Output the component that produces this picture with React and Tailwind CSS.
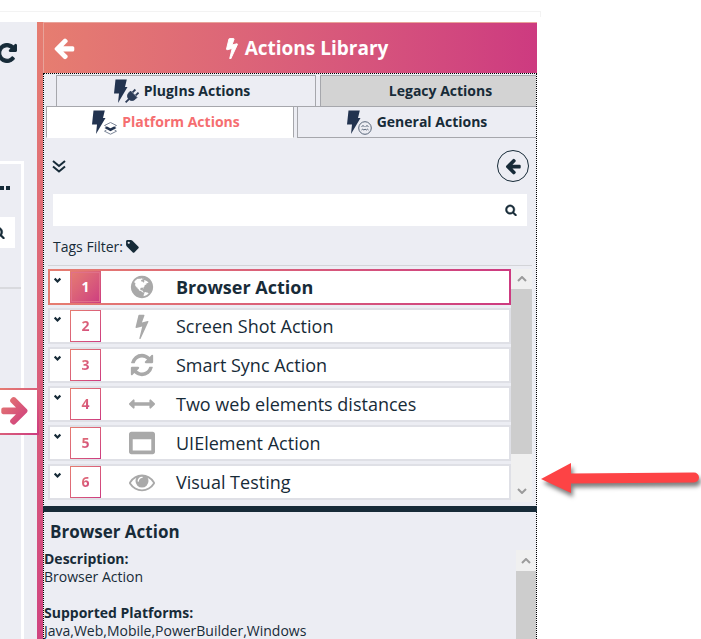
import { useState } from "react";

const paths = {
  arrowLeft:
    "M1664 896v128q0 53-32.5 90.5t-84.5 37.5h-704l293 294q38 36 38 90t-38 90l-75 76q-37 37-90 37-52 0-91-37l-651-652q-37-37-37-90 0-52 37-91l651-650q38-38 91-38 52 0 90 38l75 74q38 38 38 91t-38 91l-293 293h704q52 0 84.5 37.5t32.5 90.5z",
  bolt: "M1333 566q18 20 7 44l-540 1157q-13 25-42 25-4 0-14-2-17-5-25.5-19t-4.5-30l197-808-406 101q-4 1-12 1-18 0-31-11-18-15-13-39l201-825q4-14 16-23t28-9h328q19 0 32 12.5t13 29.5q0 8-5 18l-171 463 396-98q8-2 12-2 19 0 34 15z",
  search:
    "M1216 832q0-185-131.5-316.5t-316.5-131.5-316.5 131.5-131.5 316.5 131.5 316.5 316.5 131.5 316.5-131.5 131.5-316.5zm512 832q0 52-38 90t-90 38q-54 0-90-38l-343-342q-179 124-399 124-143 0-273.5-55.5t-225-150-150-225-55.5-273.5 55.5-273.5 150-225 225-150 273.5-55.5 273.5 55.5 225 150 150 225 55.5 273.5q0 220-124 399l343 343q37 37 37 90z",
  refresh:
    "M1639 1056q0 5-1 7-64 268-268 434.5t-478 166.5q-146 0-282.5-55t-243.5-157l-129 129q-19 19-45 19t-45-19-19-45v-448q0-26 19-45t45-19h448q26 0 45 19t19 45-19 45l-137 137q71 66 161 102t187 36q134 0 250-65t186-179q11-17 53-117 8-23 30-23h192q13 0 22.5 9.5t9.5 22.5zm25-800v448q0 26-19 45t-45 19h-448q-26 0-45-19t-19-45 19-45l138-138q-148-137-349-137-134 0-250 65t-186 179q-11 17-53 117-8 23-30 23h-199q-13 0-22.5-9.5t-9.5-22.5v-7q65-268 270-434.5t480-166.5q146 0 284 55.5t245 156.5l130-129q19-19 45-19t45 19 19 45z",
  arrowsH:
    "M1792 896q0 26-19 45l-256 256q-19 19-45 19t-45-19-19-45v-128h-1024v128q0 26-19 45t-45 19-45-19l-256-256q-19-19-19-45t19-45l256-256q19-19 45-19t45 19 19 45v128h1024v-128q0-26 19-45t45-19 45 19l256 256q19 19 19 45z",
  window:
    "M256 1408h1280v-768h-1280v768zm1536-1120v1216q0 66-47 113t-113 47h-1472q-66 0-113-47t-47-113v-1216q0-66 47-113t113-47h1472q66 0 113 47t47 113z",
  eye: "M1664 960q-152-236-381-353 61 104 61 225 0 185-131.5 316.5t-316.5 131.5-316.5-131.5-131.5-316.5q0-121 61-225-229 117-381 353 133 205 333.5 326.5t434.5 121.5 434.5-121.5 333.5-326.5zm-720-384q0-20-14-34t-34-14q-125 0-214.5 89.5t-89.5 214.5q0 20 14 34t34 14 34-14 14-34q0-86 61-147t147-61q20 0 34-14t14-34zm848 384q0 34-20 69-140 230-376.5 368.5t-499.5 138.5-499.5-139-376.5-368q-20-35-20-69t20-69q140-229 376.5-368t499.5-139 499.5 139 376.5 368q20 35 20 69z",
  tag: "M576 448q0-53-37.5-90.5t-90.5-37.5-90.5 37.5-37.5 90.5 37.5 90.5 90.5 37.5 90.5-37.5 37.5-90.5zm1067 576q0 53-37 90l-491 492q-39 37-91 37-53 0-90-37l-715-716q-38-37-64.5-101t-26.5-117v-416q0-52 38-90t90-38h416q53 0 117 26.5t102 64.5l715 714q37 39 37 91z",
  redo: "M1664 256v448q0 26-19 45t-45 19h-448q-42 0-59-40-17-39 14-69l138-138q-148-137-349-137-104 0-198.5 40.5t-163.5 109.5-109.5 163.5-40.5 198.5 40.5 198.5 109.5 163.5 163.5 109.5 198.5 40.5q119 0 225-52t179-147q7-10 23-12 15 0 25 9l137 138q9 8 9.5 20.5t-7.5 22.5q-109 132-264 204.5t-327 72.5q-156 0-298-61t-245-164-164-245-61-298 61-298 164-245 245-164 298-61q147 0 284.5 55.5t244.5 156.5l130-129q29-31 70-14 39 17 39 59z",
  globe:
    "M896 128q209 0 385.5 103t279.5 279.5 103 385.5-103 385.5-279.5 279.5-385.5 103-385.5-103-279.5-279.5-103-385.5 103-385.5 279.5-279.5 385.5-103zm274 521q-2 1-9.5 9.5t-13.5 9.5q2 0 4.5-5t5-11 3.5-7q6-7 22-15 14-6 52-12 34-8 51 11-2-2 9.5-13t14.5-12q3-2 15-4.5t15-7.5l2-22q-12 1-17.5-7t-6.5-21q0 2-6 8 0-7-4.5-8t-11.5 1-9 1q-10-3-15-7.5t-8-16.5-4-15q-2-5-9.5-11t-9.5-10q-1-2-2.5-5.5t-3-6.5-4-5.5-5.5-2.5-7 5-7.5 10-4.5 5q-3-2-6-1.5t-4.5 1-4.5 3-5 3.5q-3 2-8.5 3t-8.5 2q15-5-1-11-10-4-16-3 9-4 7.5-12t-8.5-14h5q-1-4-8.5-8.5t-17.5-8.5-13-6q-8-5-34-9.5t-33-.5q-5 6-4.5 10.5t4 14 3.5 12.5q1 6-5.500 13t-6.500 12q0 7 14 15.5t10 21.5q-3 8-16 16t-16 12q-5 8-1.500 18.5t10.500 16.500q2 2 1.500 4t-3.500 4.500-5.500 4-6.500 3.500l-3 2q-11 5-20.500-6t-13.500-26q-7-25-16-30-23-8-29 1-5-13-41-26-25-9-58-4 6-1 0-15-7-15-19-12 3-6 4-17.500t1-13.500q3-13 12-23 1-1 7-8.500t9.500-13.500.5-6q35 4 50-11 5-5 11.500-17t10.500-17q9-6 14-5.500t14.500 5.500 14.500 5q14 1 15.500-11t-7.500-20q12 1 3-17-4-7-8-9-12-4-27 5-8 4 2 8-1-1-9.500 10.500t-16.500 17.500-16-5q-1-1-5.500-13.500t-9.500-13.500q-8 0-16 15 3-8-11-15t-24-8q19-12-8-27-7-4-20.500-5t-19.500 4q-5 7-5.500 11.500t5 8 10.500 5.500 11.500 4 8.500 3q14 10 8 14-2 1-8.500 3.500t-11.500 4.500-6 4q-3 4 0 14t-2 14q-5-5-9-17.500t-7-16.500q7 9-25 6l-10-1q-4 0-16 2t-20.500 1-13.500-8q-4-8 0-20 1-4 4-2-4-3-11-9.500t-10-8.500q-46 15-94 41 6 1 12-1 5-2 13-6.500t10-5.500q34-14 42-7l5-5q14 16 20 25-7-4-30-1-20 6-22 12 7 12 5 18-4-3-11.500-10t-14.500-11-15-5q-16 0-22 1-146 80-235 222 7 7 12 8 4 1 5 9t2.500 11 11.500-3q9 8 3 19 1-1 44 27 19 17 21 21 3 11-10 18-1-2-9-9t-9-4q-3 5 .5 18.500t10.500 12.500q-7 0-9.500 16t-2.500 35.500-1 23.500l2 1q-3 12 5.500 34.500t21.500 19.500q-13 3 20 43 6 8 8 9 3 2 12 7.500t15 10 10 10.500q4 5 10 22.500t14 23.500q-2 6 9.500 20t10.500 23q-1 0-2.500 1t-2.500 1q3 7 15.500 14t15.500 13q1 3 2 10t3 11 8 2q2-20-24-62-15-25-17-29-3-5-5.500-15.500t-4.500-14.500q2 0 6 1.500t8.500 3.500 7.500 4 2 3q-3 7 2 17.500t12 18.500 17 19 12 13q6 6 14 19.500t0 13.500q9 0 20 10.500t17 19.500q5 8 8 26t5 24q2 7 8.500 13.500t12.500 9.500l16 8 13 7q5 2 18.500 10.500t21.500 11.500q10 4 16 4t14.500-2.500 13.500-3.500q15-2 29 15t21 21q36 19 55 11-2 1 .5 7.500t8 15.500 9 14.500 5.500 8.500q5 6 18 15t18 15q6-4 7-9-3 8 7 20t18 10q14-3 14-32-31 15-49-18 0-1-2.500-5.500t-4-8.500-2.500-8.500 0-7.500 5-3q9 0 10-3.500t-2-12.500-4-13q-1-8-11-20t-12-15q-5 9-16 8t-16-9q0 1-1.500 5.500t-1.500 6.500q-13 0-15-1 1-3 2.500-17.500t3.500-22.500q1-4 5.500-12t7.500-14.500 4-12.500-4.500-9.500-17.500-2.500q-19 1-26 20-1 3-3 10.500t-5 11.500-9 7q-7 3-24 2t-24-5q-13-8-22.500-29t-9.500-37q0-10 2.500-26.500t3-25-5.500-24.500q3-2 9-9.500t10-10.500q2-1 4.500-1.500t4.500 0 4-1.500 3-6q-1-1-4-3-3-3-4-3 7 3 28.500-1.500t27.500 1.500q15 11 22-2 0-1-2.500-9.500t-.5-13.500q5 27 29 9 3 3 15.500 5t17.500 5q3 2 7 5.500t5.500 4.500 5-.5 8.500-6.500q10 14 12 24 11 40 19 44 7 3 11 2t4.500-9.500 0-14-1.500-12.500l-1-8v-18l-1-8q-15-3-18.500-12t1.500-18.500 15-18.500q1-1 8-3.500t15.500-6.500 12.500-8q21-19 15-35 7 0 11-9-1 0-5-3t-7.500-5-4.500-2q9-5 2-16 5-3 7.500-11t7.500-10q9 12 21 2 8-8 1-16 5-7 20.500-10.500t18.500-9.500q7 2 8-2t1-12 3-12q4-5 15-9t13-5l17-11q3-4 0-4 18 2 31-11 10-11-6-20 3-6-3-9.500t-15-5.500q3-1 11.500-.5t10.500-1.500q15-10-7-16-17-5-43 12zm-163 877q206-36 351-189-3-3-12.500-4.500t-12.500-3.500q-18-7-24-8 1-7-2.500-13t-8-9-12.500-8-11-7q-2-2-7-6t-7-5.500-7.500-4.500-8.500-2-10 1l-3 1q-3 1-5.500 2.500t-5.500 3-4 3 0 2.500q-21-17-36-22-5-1-11-5.500t-10.500-7-10-1.500-11.500 7q-5 5-6 15t-2 13q-7-5 0-17.500t2-18.500q-3-6-10.500-4.500t-12 4.500-11.500 8.500-9 6.500-8.500 5.500-8.500 7.500q-3 4-6 12t-5 11q-2-4-11.500-6.500t-9.500-5.500q2 10 4 35t5 38q7 31-12 48-27 25-29 40-4 22 12 26 0 7-8 20.500t-7 21.500q0 6 2 16z",
};

function Icon({ name, className, fill = "currentColor", weight = 0 }) {
  return (
    <svg viewBox="0 0 1792 1792" className={className} fill={fill} stroke={fill} strokeWidth={weight} aria-hidden="true">
      <path d={paths[name]} />
    </svg>
  );
}

function Chevron({ className, up, width = 2 }) {
  return (
    <svg viewBox="0 0 10 6" className={className} fill="none" stroke="currentColor" strokeWidth={width} aria-hidden="true">
      <path d={up ? "M1 5l4-4 4 4" : "M1 1l4 4 4-4"} />
    </svg>
  );
}

function TabIcon({ kind }) {
  return (
    <svg viewBox="0 0 25 25" className="h-[25px] w-[25px] shrink-0" aria-hidden="true">
      <path d="M1.500.5h11.300l-1.800 7.500h2.500L4 24l1-9.500H0z" fill="#22334f" />
      {kind === "plug" && (
        <g transform="translate(18 17) rotate(45)" fill="#2c3c57" stroke="#2c3c57">
          <path d="M-4.500 -2.500h9v2.500a4.500 4.500 0 0 1-9 0z" strokeWidth=".8" />
          <path d="M-2.200-3v-4M2.200-3v-4M0 4v5" strokeWidth="1.800" fill="none" />
        </g>
      )}
      {kind === "layers" && (
        <g strokeLinejoin="round">
          <path d="M12.500 15.500l6-3 6 3-2 1M12.500 15.500l2 1" stroke="#7b8597" strokeWidth="1" fill="none" />
          <path d="M12.500 18l2.500-1.500 3.500 1.700 3.500-1.700 2.500 1.500-6 3.200z" fill="#22334f" />
          <path d="M14.500 20l-2 1.200 6 3 6-3-2-1.200" stroke="#7b8597" strokeWidth="1" fill="none" />
        </g>
      )}
      {kind === "face" && (
        <g stroke="#596679" strokeWidth="1" fill="none">
          <circle cx="18" cy="18" r="6.300" fill="#ecedf3" />
          <path d="M14.500 16.500l1.500-.8 1.500.8M18.500 16.500l1.500-.8 1.500.8M14.500 20l1.200-.8 1.200.8 1.200-.8 1.200.8 1.200-.8 1 .8" />
        </g>
      )}
    </svg>
  );
}

function Tab({ label, icon, active, className, onClick }) {
  return (
    <button
      type="button"
      role="tab"
      aria-selected={active}
      onClick={onClick}
      className={`flex items-center justify-center gap-[5px] border border-[#a6a7ac] text-sm leading-5 font-bold ${className} ${
        active ? "border-b-white bg-white text-[#f56e70]" : "text-[#172b38]"
      }`}
    >
      {icon && <TabIcon kind={icon} />}
      {label}
    </button>
  );
}

const actions = [
  { name: "Browser Action", icon: "globe" },
  { name: "Screen Shot Action", icon: "bolt" },
  { name: "Smart Sync Action", icon: "refresh" },
  { name: "Two web elements distances", icon: "arrowsH" },
  { name: "UIElement Action", icon: "window" },
  { name: "Visual Testing", icon: "eye" },
];

function ActionRow({ index, action, selected, onSelect }) {
  return (
    <li className={`h-9 p-0.5 ${selected ? "bg-linear-to-r from-[#e67d70] to-[#cd3a80]" : "bg-[#dfe0e6]"}`}>
      <div className="flex h-full bg-white">
        <button type="button" aria-label={`Expand ${action.name}`} className="flex w-5 items-start pt-1.5 pl-1">
          <Chevron className="h-1.5 w-[7px]" width={3} />
        </button>
        <button type="button" onClick={onSelect} className="flex flex-1 items-center text-left">
          <span className="h-8 w-[31px] bg-linear-to-br from-[#e67d70] to-[#cd3a80] p-px">
            <span className={`flex h-full items-center justify-center ${selected ? "border border-[#e0708a]" : "bg-white"}`}>
              <span
                className={`text-sm leading-5 font-bold ${
                  selected ? "text-white" : "bg-linear-to-br from-[#e67d70] to-[#cd3a80] bg-clip-text text-transparent"
                }`}
              >
                {index}
              </span>
            </span>
          </span>
          <Icon name={action.icon} className="ml-7 h-[26px] w-[26px] text-[#a9a9a9]" />
          <span className={`ml-[21px] text-lg leading-6 ${selected ? "font-bold" : ""}`}>{action.name}</span>
        </button>
      </div>
    </li>
  );
}

function Workspace() {
  return (
    <aside className="flex w-[37px] shrink-0 flex-col overflow-hidden bg-[#ecedf3]">
      <div className="flex h-[139px] justify-end pt-5 pr-[19px]">
        <button type="button" aria-label="Redo" className="h-[22px] w-[22px] shrink-0">
          <Icon name="redo" className="h-[22px] w-[22px]" weight={90} />
        </button>
      </div>
      <div className="mr-[13px] flex flex-1 flex-col border-t-[3px] border-r-[3px] border-white">
        <div className="flex h-[53px] items-start gap-0.5 pt-[22px]">
          <span className="h-1 w-1 bg-[#172b38]" />
          <span className="h-1 w-1 bg-[#172b38]" />
        </div>
        <div className="mr-1.5 flex h-[31px] items-center justify-end overflow-hidden bg-white pr-2.5">
          <Icon name="search" className="h-[13px] w-[13px] shrink-0" weight={60} />
        </div>
        <div className="mt-[39px] border-t-2 border-[#d9dade]" />
      </div>
    </aside>
  );
}

function Annotation() {
  return (
    <div className="w-[164px] shrink-0 pt-[435px] pl-1">
      <svg viewBox="0 0 160 46" className="h-[46px] w-[160px] overflow-visible drop-shadow-[2px_4px_2px_rgba(0,0,0,0.5)]" aria-hidden="true">
        <path d="M0 22L30 6v10.500l123-1a5 5 0 0 1 0 10L30 26.500V36z" fill="#fd4345" />
      </svg>
    </div>
  );
}

export default function App() {
  const [tab, setTab] = useState("Platform Actions");
  const [selected, setSelected] = useState(0);

  return (
    <div className="flex h-screen flex-col overflow-hidden bg-white font-['Open_Sans','Segoe_UI',sans-serif] text-[#172b38]">
      <div className="mr-40 h-[22px] shrink-0 pt-[11px]">
        <div className="h-1.5 border-t border-r border-[#f3f3f3]" />
      </div>
      <div className="flex min-h-0 flex-1">
        <Workspace />
        <div className="relative w-1.5 shrink-0 bg-linear-to-b from-[#e67d70] to-[#d04480]">
          <button
            type="button"
            aria-label="Open panel"
            className="absolute top-[366px] right-1 h-[47px] w-10 bg-linear-to-br from-[#e67d70] to-[#cd3a80] py-0.5 pr-0.5"
          >
            <span className="flex h-full items-center justify-end bg-white pr-1.5">
              <svg viewBox="0 0 1792 1792" className="h-8 w-8 shrink-0 rotate-180" aria-hidden="true">
                <defs>
                  <linearGradient id="arrow" x1="1" y1="1" x2="0" y2="0">
                    <stop stopColor="#e67d70" />
                    <stop offset="1" stopColor="#cd3a80" />
                  </linearGradient>
                </defs>
                <path d={paths.arrowLeft} fill="url(#arrow)" />
              </svg>
            </span>
          </button>
        </div>

        <main className="flex min-w-0 flex-1 flex-col bg-[#ecedf3]">
          <header className="flex h-[51px] shrink-0 items-center border-t border-l border-[#e8a39a] bg-linear-to-r from-[#e67d70] to-[#cd3a80] pl-2 text-white">
            <button type="button" aria-label="Back" className="h-6 w-6">
              <Icon name="arrowLeft" className="h-6 w-6" />
            </button>
            <h1 className="flex flex-1 items-center justify-center gap-0.5 pr-1 text-[19px] leading-7 font-bold">
              <Icon name="bolt" className="h-[22px] w-[22px]" weight={80} />
              Actions Library
            </h1>
          </header>

          <div className="flex min-h-0 flex-1 flex-col border-x border-t border-dotted border-black">
            <div role="tablist" aria-label="Action groups" className="shrink-0 pt-px">
              <div className="grid grid-cols-[260fr_216fr] gap-1 pl-3">
                <Tab
                  label="PlugIns Actions"
                  icon="plug"
                  active={tab === "PlugIns Actions"}
                  onClick={() => setTab("PlugIns Actions")}
                  className="h-8 pr-2"
                />
                <Tab
                  label="Legacy Actions"
                  active={tab === "Legacy Actions"}
                  onClick={() => setTab("Legacy Actions")}
                  className="h-8 border-r-0 bg-[#d3d3d3] pl-6"
                />
              </div>
              <div className="-mt-px grid grid-cols-[248fr_239fr] gap-[3px] pl-0.5">
                <Tab
                  label="Platform Actions"
                  icon="layers"
                  active={tab === "Platform Actions"}
                  onClick={() => setTab("Platform Actions")}
                  className="h-8 pr-2"
                />
                <Tab
                  label="General Actions"
                  icon="face"
                  active={tab === "General Actions"}
                  onClick={() => setTab("General Actions")}
                  className="h-8 border-r-0 bg-[#ecedf3]"
                />
              </div>
            </div>

            <div className="flex h-14 shrink-0 items-center justify-between pr-[7px] pl-2">
              <button type="button" aria-label="Expand all">
                <svg viewBox="0 0 14 13" className="h-[13px] w-3.5" fill="none" stroke="currentColor" strokeWidth="2" aria-hidden="true">
                  <path d="M1 1l6 5 6-5M1 6.500l6 5 6-5" />
                </svg>
              </button>
              <button
                type="button"
                aria-label="Previous"
                className="flex h-8 w-8 items-center justify-center rounded-full border border-[#172b38]"
              >
                <Icon name="arrowLeft" className="h-[18px] w-[18px]" />
              </button>
            </div>

            <label className="mx-[9px] flex h-8 shrink-0 items-center bg-white pr-2.5">
              <input type="text" aria-label="Search actions" className="h-full min-w-0 flex-1 px-2 text-base outline-none" />
              <Icon name="search" className="h-3 w-3" weight={60} />
            </label>

            <div className="ml-[9px] flex h-[39px] shrink-0 items-center gap-0.5 pt-0.5 text-sm leading-5">
              Tags Filter:
              <Icon name="tag" className="h-[15px] w-[15px]" />
            </div>

            <div className="mx-1 flex h-[241px] shrink-0 border-t border-[#d3d4d8] pt-[3px]">
              <ul className="flex flex-1 flex-col gap-[3px] overflow-hidden">
                {actions.map((action, i) => (
                  <ActionRow
                    key={action.name}
                    index={i + 1}
                    action={action}
                    selected={selected === i}
                    onSelect={() => setSelected(i)}
                  />
                ))}
              </ul>
              <div className="mb-1 flex w-[21px] flex-col items-center bg-[#f0f0f0] text-[#9b9b9b]">
                <span className="flex h-5 items-center">
                  <Chevron up className="h-1.5 w-2.5" />
                </span>
                <span className="h-[165px] w-full bg-[#cdcdcd]" />
                <span className="flex flex-1 items-end pb-2">
                  <Chevron className="h-1.5 w-2.5" />
                </span>
              </div>
            </div>
            <div className="-mx-px h-1.5 shrink-0 bg-[#172b38]" />

            <section className="flex min-h-0 flex-1 flex-col">
              <h2 className="h-[38px] shrink-0 pt-2 pl-1.5 text-[17px] leading-6 font-bold">{actions[selected].name}</h2>
              <div className="flex min-h-0 flex-1 overflow-hidden">
                <dl className="flex-1 text-sm leading-[18px]">
                  <dt className="font-bold">Description:</dt>
                  <dd>{actions[selected].name}</dd>
                  <dt className="mt-[18px] font-bold">Supported Platforms:</dt>
                  <dd>Java,Web,Mobile,PowerBuilder,Windows</dd>
                </dl>
                <div className="flex w-5 flex-col items-center bg-[#f0f0f0] text-[#9b9b9b]">
                  <span className="flex h-[21px] items-center">
                    <Chevron up className="h-1.5 w-2.5" />
                  </span>
                  <span className="w-full flex-1 bg-[#cdcdcd]" />
                </div>
              </div>
            </section>
          </div>
        </main>
        <Annotation />
      </div>
    </div>
  );
}
